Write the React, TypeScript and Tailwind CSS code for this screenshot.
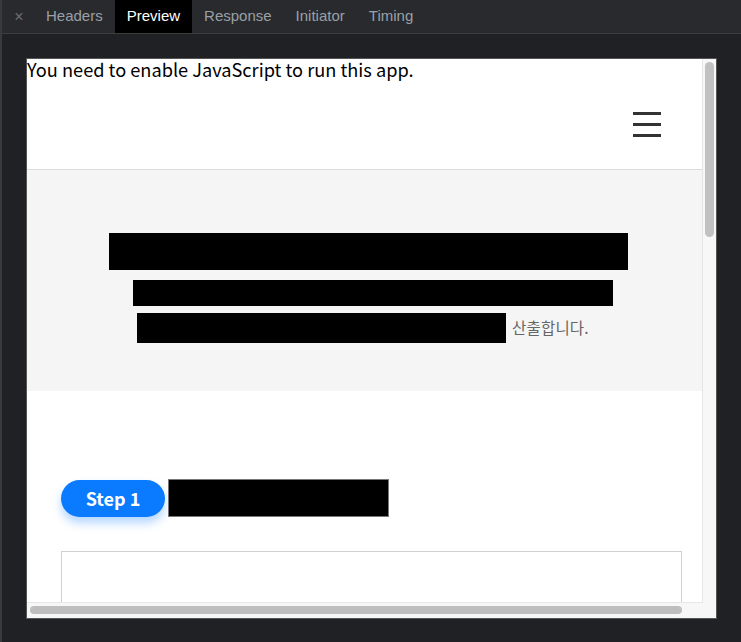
import React from 'react';

const tabs = ['Headers', 'Preview', 'Response', 'Initiator', 'Timing'];

function TabBar() {
  return (
    <div className="flex h-[34px] items-stretch border-b border-[#3d3d3d] bg-[#292a2d] pl-[10px] text-[15px] font-['Liberation_Sans',Arial,sans-serif]">
      <span className="flex w-[14px] items-center justify-center text-[16px] text-[#6e6e6e]">×</span>
      <div className="ml-[8px] flex items-stretch">
        {tabs.map(t => (
          <div
            key={t}
            className={`flex items-center px-[12px] ${t === 'Preview' ? 'bg-black text-white' : 'text-[#9aa0a6]'}`}
          >
            {t}
          </div>
        ))}
      </div>
    </div>
  );
}

function Hamburger() {
  return (
    <div className="flex w-[28px] flex-col gap-[8px]">
      <span className="h-[3px] bg-[#333]" />
      <span className="h-[3px] bg-[#333]" />
      <span className="h-[3px] bg-[#333]" />
    </div>
  );
}

function Page() {
  return (
    <div className="flex h-full w-[690px] flex-col font-['Noto_Sans_CJK_KR','Noto_Sans',sans-serif]">
      <p className="flex h-[20px] shrink-0 items-center whitespace-nowrap text-[18.2px] leading-[18px] text-black">
        You need to enable JavaScript to run this app.
      </p>
      <header className="flex h-[91px] shrink-0 items-center justify-end border-b border-[#dcdcdc] pr-[56px]">
        <Hamburger />
      </header>
      <section className="flex h-[221px] shrink-0 flex-col items-start bg-[#f5f5f5] pt-[63px]">
        <div className="ml-[82px] h-[37px] w-[519px] bg-black" />
        <div className="ml-[106px] mt-[10px] h-[26px] w-[480px] bg-black" />
        <div className="ml-[110px] mt-[7px] flex items-center">
          <div className="h-[30px] w-[369px] bg-black" />
          <span className="ml-[6px] text-[15.5px] tracking-[0.2px] text-[#666]">산출합니다.</span>
        </div>
      </section>
      <section className="flex min-h-0 flex-1 flex-col px-[34px] pt-[88px]">
        <div className="flex items-center">
          <div className="flex h-[37px] w-[104px] items-center justify-center rounded-full bg-[#0a7bff] text-[18px] font-bold text-white shadow-[0_6px_10px_rgba(10,123,255,0.3)]">
            Step 1
          </div>
          <div className="ml-[3px] h-[38px] w-[221px] border border-[#777] bg-black" />
        </div>
        <div className="mt-[34px] w-[621px] flex-1 border border-b-0 border-[#d0d0d0]" />
      </section>
    </div>
  );
}

export default function App() {
  return (
    <div className="h-[642px] w-[741px] overflow-hidden border-l-2 border-[#3a3a3a] bg-[#202124]">
      <TabBar />
      <div className="pl-[24px] pt-[24px]">
        <div className="flex h-[561px] w-[691px] flex-col border border-[#555] bg-white">
          <div className="flex min-h-0 flex-1">
            <div className="min-w-0 flex-1 overflow-x-clip border-r border-b border-[#e6e6e6]">
              <Page />
            </div>
            <div className="w-[13px] bg-[#f7f7f7] px-[2px] pt-[3px]">
              <div className="h-[175px] rounded-full bg-[#c1c1c1]" />
            </div>
          </div>
          <div className="flex h-[15px] bg-[#f7f7f7] pl-[3px] pt-[3px]">
            <div className="h-[8px] w-[652px] rounded-full bg-[#bebebe]" />
          </div>
        </div>
      </div>
    </div>
  );
}
